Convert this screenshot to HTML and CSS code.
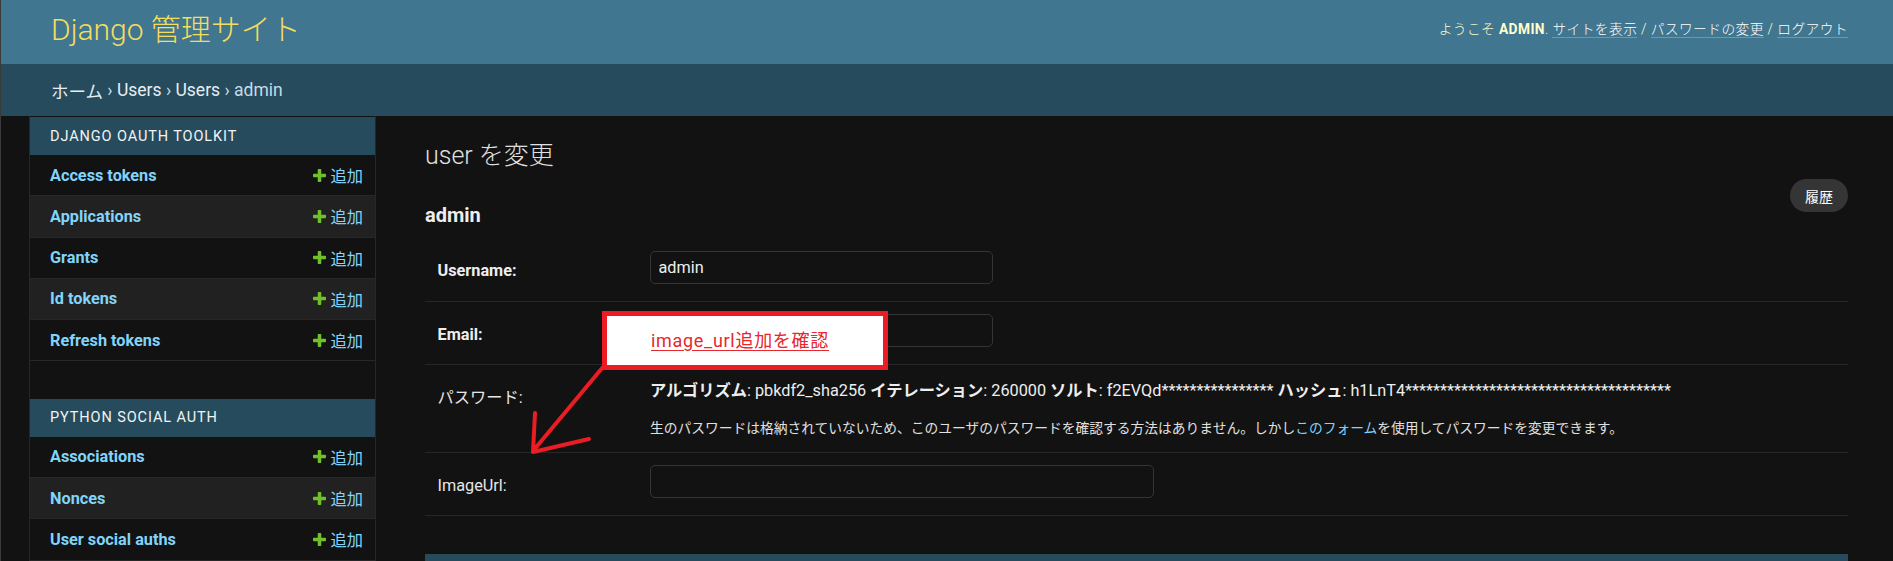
FILE: index.html
```html
<!DOCTYPE html>
<html lang="ja">
<head>
<meta charset="utf-8">
<title>user を変更 | Django 管理サイト</title>
<link rel="stylesheet" href="styles.css">
</head>
<body>
<div class="page">
  <header class="header">
    <div class="branding">Django 管理サイト</div>
    <div class="user-tools">ようこそ <strong>ADMIN</strong>. <a class="tool-link">サイトを表示</a> / <a class="tool-link">パスワードの変更</a> / <a class="tool-link">ログアウト</a></div>
  </header>
  <nav class="breadcrumbs"><a class="crumb-link">ホーム</a>&nbsp;›&nbsp;<a class="crumb-link">Users</a>&nbsp;›&nbsp;<a class="crumb-link">Users</a>&nbsp;›&nbsp;admin</nav>
  <div class="layout">
    <div class="toggle"></div>
    <aside class="sidebar">
      <section class="module">
        <div class="caption">Django OAuth Toolkit</div>
        <div class="row"><a class="model">Access tokens</a><a class="add"><svg class="plus" viewBox="192 192 1408 1408"><path d="M1600 796v192q0 40-28 68t-68 28h-416v416q0 40-28 68t-68 28h-192q-40 0-68-28t-28-68v-416h-416q-40 0-68-28t-28-68v-192q0-40 28-68t68-28h416v-416q0-40 28-68t68-28h192q40 0 68 28t28 68v416h416q40 0 68 28t28 68z"/></svg>追加</a></div>
        <div class="row alt"><a class="model">Applications</a><a class="add"><svg class="plus" viewBox="192 192 1408 1408"><path d="M1600 796v192q0 40-28 68t-68 28h-416v416q0 40-28 68t-68 28h-192q-40 0-68-28t-28-68v-416h-416q-40 0-68-28t-28-68v-192q0-40 28-68t68-28h416v-416q0-40 28-68t68-28h192q40 0 68 28t28 68v416h416q40 0 68 28t28 68z"/></svg>追加</a></div>
        <div class="row"><a class="model">Grants</a><a class="add"><svg class="plus" viewBox="192 192 1408 1408"><path d="M1600 796v192q0 40-28 68t-68 28h-416v416q0 40-28 68t-68 28h-192q-40 0-68-28t-28-68v-416h-416q-40 0-68-28t-28-68v-192q0-40 28-68t68-28h416v-416q0-40 28-68t68-28h192q40 0 68 28t28 68v416h416q40 0 68 28t28 68z"/></svg>追加</a></div>
        <div class="row alt"><a class="model">Id tokens</a><a class="add"><svg class="plus" viewBox="192 192 1408 1408"><path d="M1600 796v192q0 40-28 68t-68 28h-416v416q0 40-28 68t-68 28h-192q-40 0-68-28t-28-68v-416h-416q-40 0-68-28t-28-68v-192q0-40 28-68t68-28h416v-416q0-40 28-68t68-28h192q40 0 68 28t28 68v416h416q40 0 68 28t28 68z"/></svg>追加</a></div>
        <div class="row"><a class="model">Refresh tokens</a><a class="add"><svg class="plus" viewBox="192 192 1408 1408"><path d="M1600 796v192q0 40-28 68t-68 28h-416v416q0 40-28 68t-68 28h-192q-40 0-68-28t-28-68v-416h-416q-40 0-68-28t-28-68v-192q0-40 28-68t68-28h416v-416q0-40 28-68t68-28h192q40 0 68 28t28 68v416h416q40 0 68 28t28 68z"/></svg>追加</a></div>
      </section>
      <section class="module">
        <div class="caption">Python Social Auth</div>
        <div class="row"><a class="model">Associations</a><a class="add"><svg class="plus" viewBox="192 192 1408 1408"><path d="M1600 796v192q0 40-28 68t-68 28h-416v416q0 40-28 68t-68 28h-192q-40 0-68-28t-28-68v-416h-416q-40 0-68-28t-28-68v-192q0-40 28-68t68-28h416v-416q0-40 28-68t68-28h192q40 0 68 28t28 68v416h416q40 0 68 28t28 68z"/></svg>追加</a></div>
        <div class="row alt"><a class="model">Nonces</a><a class="add"><svg class="plus" viewBox="192 192 1408 1408"><path d="M1600 796v192q0 40-28 68t-68 28h-416v416q0 40-28 68t-68 28h-192q-40 0-68-28t-28-68v-416h-416q-40 0-68-28t-28-68v-192q0-40 28-68t68-28h416v-416q0-40 28-68t68-28h192q40 0 68 28t28 68v416h416q40 0 68 28t28 68z"/></svg>追加</a></div>
        <div class="row"><a class="model">User social auths</a><a class="add"><svg class="plus" viewBox="192 192 1408 1408"><path d="M1600 796v192q0 40-28 68t-68 28h-416v416q0 40-28 68t-68 28h-192q-40 0-68-28t-28-68v-416h-416q-40 0-68-28t-28-68v-192q0-40 28-68t68-28h416v-416q0-40 28-68t68-28h192q40 0 68 28t28 68v416h416q40 0 68 28t28 68z"/></svg>追加</a></div>
      </section>
    </aside>
    <main class="content">
      <h1 class="title">user を変更</h1>
      <div class="subhead">
        <h2 class="object-name">admin</h2>
        <a class="history">履歴</a>
      </div>
      <div class="fieldset">
        <div class="form-row">
          <label class="field-label required">Username:</label>
          <div class="field"><input class="text-input" type="text" value="admin"></div>
        </div>
        <div class="form-row">
          <label class="field-label required">Email:</label>
          <div class="field"><input class="text-input" type="text" value=""></div>
        </div>
        <div class="form-row">
          <label class="field-label">パスワード:</label>
          <div class="field">
            <div class="hash"><strong>アルゴリズム</strong>: pbkdf2_sha256 <strong>イテレーション</strong>: 260000 <strong>ソルト</strong>: f2EVQd**************** <strong>ハッシュ</strong>: h1LnT4**************************************</div>
            <div class="help">生のパスワードは格納されていないため、このユーザのパスワードを確認する方法はありません。しかし<a class="help-link">このフォーム</a>を使用してパスワードを変更できます。</div>
          </div>
        </div>
        <div class="form-row">
          <label class="field-label">ImageUrl:</label>
          <div class="field"><input class="text-input url-input" type="text" value=""></div>
        </div>
      </div>
      <div class="next-module"></div>
    </main>
  </div>

  <svg class="arrow" viewBox="0 0 100 100" width="100" height="100">
    <path d="M83 7 L13 91 M15 53 L13 92 L69 79" fill="none" stroke="#ea1c24" stroke-width="4" stroke-linecap="round" stroke-linejoin="round"/>
  </svg>
  <div class="callout"><a class="callout-link">image_url追加を確認</a></div>
</div>
</body>
</html>
```

FILE: styles.css
```css
* {
  box-sizing: border-box;
}

html,
body {
  margin: 0;
  padding: 0;
  background: #121212;
}

.page {
  position: relative;
  width: 1893px;
  height: 561px;
  overflow: hidden;
  border-left: 1px solid #3a3a3a;
  background: #121212;
  color: #eeeeee;
  font-family: Roboto, "Noto Sans CJK JP", sans-serif;
}

a {
  text-decoration: none;
  cursor: pointer;
}

/* Header */
.header {
  height: 64px;
  background: #417690;
  display: flex;
  justify-content: space-between;
  align-items: flex-start;
  padding: 0 45px 0 50px;
}

.branding {
  margin-top: 11.5px;
  font-size: 30px;
  line-height: 35px;
  font-weight: 300;
  color: #f5dd5d;
}

.user-tools {
  margin-top: 21px;
  font-size: 13.75px;
  line-height: 16px;
  font-weight: 300;
  letter-spacing: 0.4px;
  color: #ffffcc;
}

.user-tools strong {
  font-weight: 700;
}

.tool-link {
  color: #ffffff;
  border-bottom: 1px solid rgba(255, 255, 255, 0.25);
}

/* Breadcrumbs */
.breadcrumbs {
  height: 52px;
  background: #264b5d;
  padding: 0 50px;
  display: flex;
  align-items: center;
  font-size: 17.5px;
  color: #c4dce8;
}

.crumb-link {
  color: #e6eef3;
}

/* Layout */
.layout {
  display: flex;
  height: 445px;
}

.toggle {
  flex: 0 0 29px;
  border-right: 1px solid #272727;
}

.sidebar {
  flex: 0 0 346px;
  border-right: 1px solid #272727;
  padding-top: 1px;
}

.module {
  margin-bottom: 37.5px;
}

.caption {
  height: 38px;
  background: #264b5d;
  color: #f3f3f3;
  padding: 0 20px;
  display: flex;
  align-items: center;
  font-size: 14.5px;
  letter-spacing: 0.9px;
  text-transform: uppercase;
}

.row {
  height: 41.25px;
  display: flex;
  align-items: center;
  justify-content: space-between;
  padding: 0 12px 0 20px;
  border-bottom: 1px solid #272727;
  font-size: 16.25px;
  background: #121212;
}

.row.alt {
  background: #212121;
}

.model {
  font-weight: 700;
  color: #81d4fa;
}

.add {
  display: flex;
  align-items: center;
  color: #81d4fa;
}

.plus {
  width: 13px;
  height: 13px;
  margin-right: 5px;
  fill: #70bf2b;
}

/* Content */
.content {
  flex: 1;
  padding: 25px 45px 0 49px;
}

.title {
  margin: 0 0 8px;
  font-size: 25px;
  line-height: 30px;
  font-weight: 300;
  color: #e0e0e0;
}

.subhead {
  display: flex;
  justify-content: space-between;
  align-items: flex-start;
  margin-bottom: 11px;
}

.object-name {
  margin: 24px 0 0;
  font-size: 20px;
  line-height: 24px;
  font-weight: 700;
  color: #eeeeee;
}

.history {
  display: flex;
  align-items: center;
  justify-content: center;
  width: 58px;
  height: 33px;
  border-radius: 16.5px;
  background: #353535;
  color: #ffffff;
  font-size: 14px;
}

.form-row {
  display: flex;
  padding: 12.5px;
  border-bottom: 1px solid #272727;
  font-size: 16.25px;
}

.field-label {
  flex: 0 0 212.5px;
  padding-top: 10.5px;
  line-height: 20px;
  color: #e6e6e6;
}

.field-label.required {
  font-weight: 700;
  color: #eeeeee;
}

.field {
  min-height: 37.5px;
}

.text-input {
  display: block;
  width: 342.5px;
  height: 33px;
  padding: 0 7.5px;
  border: 1px solid #353535;
  border-radius: 5px;
  background: #121212;
  color: #eeeeee;
  font-family: Roboto, "Noto Sans CJK JP", sans-serif;
  font-size: 16.25px;
  outline: none;
}

.url-input {
  width: 504px;
}

.hash {
  line-height: 25px;
  color: #eeeeee;
}

.help {
  margin-top: 15.5px;
  font-size: 13.75px;
  line-height: 21px;
  color: #e0e0e0;
}

.help-link {
  color: #81d4fa;
}

.next-module {
  margin-top: 38px;
  height: 40px;
  background: #264b5d;
}

/* Annotation overlay */
.arrow {
  position: absolute;
  left: 519px;
  top: 360px;
}

.callout {
  position: absolute;
  left: 601px;
  top: 311px;
  width: 286px;
  height: 59px;
  border: 5px solid #ed1c24;
  background: #ffffff;
  display: flex;
  align-items: center;
  padding-left: 44px;
}

.callout-link {
  color: #e8262d;
  font-size: 18px;
  line-height: 22px;
  letter-spacing: 0.7px;
  text-decoration: underline;
  text-underline-offset: 3px;
}
```
